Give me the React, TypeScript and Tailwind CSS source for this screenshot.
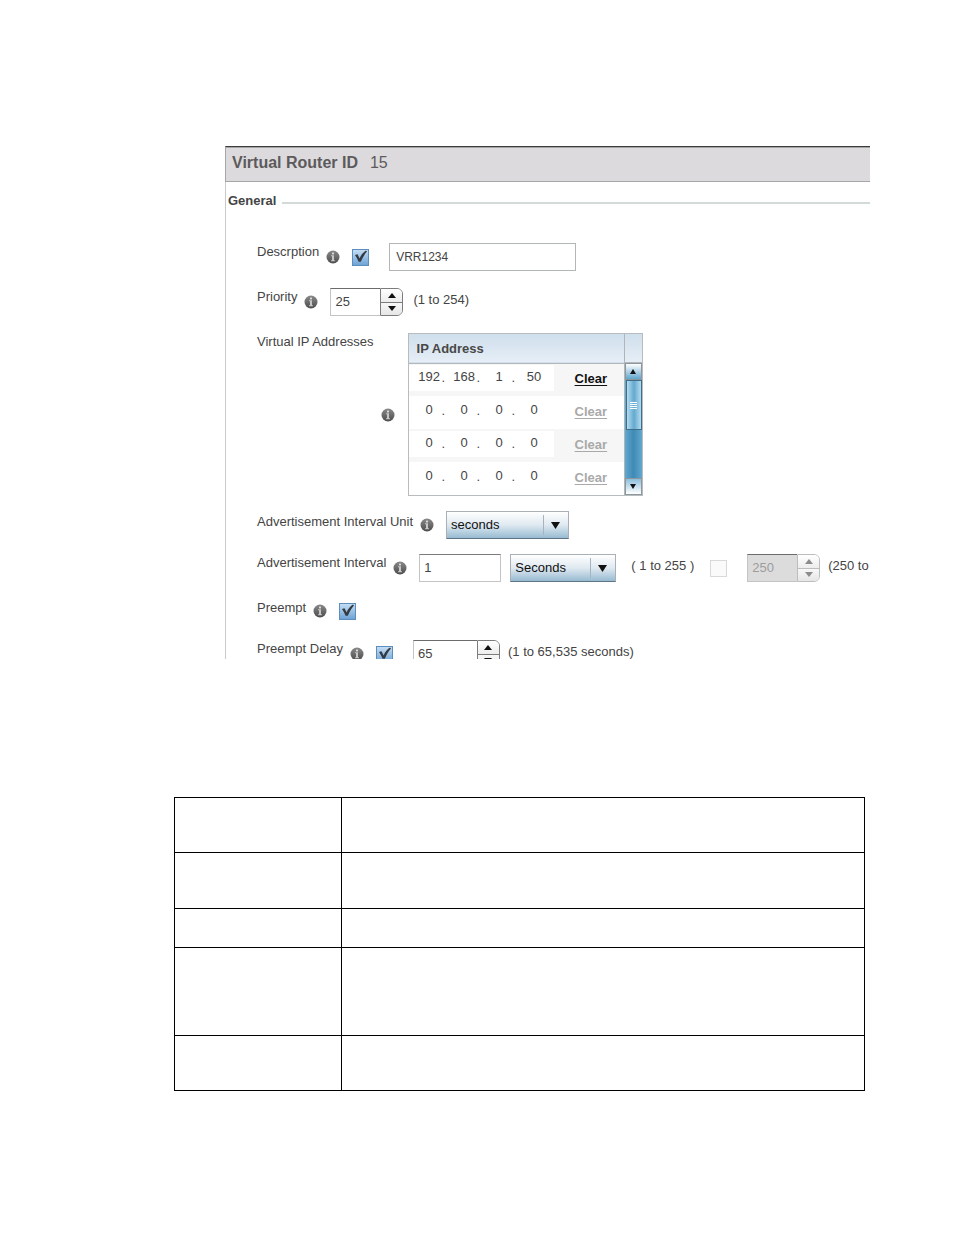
import { useState, type ReactNode } from "react";

const INITIAL_ADDRESSES = [
  ["192", "168", "1", "50"],
  ["0", "0", "0", "0"],
  ["0", "0", "0", "0"],
  ["0", "0", "0", "0"],
];

// Heights of the empty reference table rows
const REFERENCE_ROWS = ["h-[55px]", "h-[56px]", "h-[39px]", "h-[88px]", "h-[55px]"];

function InfoIcon() {
  return (
    <svg width="14" height="14" viewBox="0 0 14 14" className="-mr-px shrink-0" aria-hidden="true">
      <defs>
        <linearGradient id="info-fill" x1="0" y1="0" x2="0" y2="1">
          <stop offset="0" stopColor="#8a8a8a" />
          <stop offset="1" stopColor="#4c4c4c" />
        </linearGradient>
      </defs>
      <circle cx="7" cy="7" r="6.5" fill="url(#info-fill)" />
      <rect x="6" y="2.6" width="2" height="1.8" fill="#dcdcdc" />
      <path d="M5 5.2h3v5h1v1H5v-1h1V6.200H5z" fill="#c6c6c6" />
    </svg>
  );
}

function Arrow({ up = false, className = "h-[5px] w-2" }: { up?: boolean; className?: string }) {
  return (
    <svg viewBox="0 0 8 5" preserveAspectRatio="none" className={className} aria-hidden="true">
      <path d={up ? "M0 5L4 0L8 5z" : "M0 0L4 5L8 0z"} fill="currentColor" />
    </svg>
  );
}

interface RowProps {
  label: string;
  htmlFor?: string;
  labelClass?: string;
  children: ReactNode;
}

function Row({ label, htmlFor, labelClass = "", children }: RowProps) {
  return (
    <div className="flex min-h-7 items-center whitespace-nowrap">
      <label htmlFor={htmlFor} className={`mr-[7px] self-start leading-[18px] ${labelClass}`}>
        {label}
      </label>
      <InfoIcon />
      <div className="ml-[13px] flex items-center">{children}</div>
    </div>
  );
}

function CheckBox({ id, label, disabled = false }: { id?: string; label: string; disabled?: boolean }) {
  const [checked, setChecked] = useState(!disabled);

  return (
    <span className="relative flex size-[17px]">
      <input
        id={id}
        type="checkbox"
        aria-label={label}
        checked={checked}
        disabled={disabled}
        onChange={(e) => setChecked(e.target.checked)}
        className="size-[17px] appearance-none border border-[#5b8dbd] bg-linear-to-b from-[#c3ddf3] to-[#6fa3d6] disabled:border-[#d9d9d9] disabled:bg-[#fafafa] disabled:bg-none"
      />
      {checked && (
        <svg viewBox="0 0 17 17" className="pointer-events-none absolute inset-0" aria-hidden="true">
          <path d="M3 6L5.500 5.200L7.600 9.400C9 6.200 11 3.600 14 1.600L15 2.600C12.400 5.400 10.400 9 8.800 12.800L6.600 12.800C5.600 10.300 4.500 8.200 3 6z" fill="#333a42" />
        </svg>
      )}
    </span>
  );
}

interface SpinnerProps {
  id?: string;
  label: string;
  initial: number;
  widthClass: string;
  disabled?: boolean;
}

function Spinner({ id, label, initial, widthClass, disabled = false }: SpinnerProps) {
  const [value, setValue] = useState(String(initial));
  const step = (by: number) => setValue((v) => String(Number(v) + by));

  return (
    <div className="flex h-7">
      <input
        id={id}
        aria-label={label}
        value={value}
        disabled={disabled}
        onChange={(e) => setValue(e.target.value)}
        className={`${widthClass} h-7 border border-r-0 border-[#c4c4c4] border-t-[#6b6b6b] bg-white pb-0.5 pl-1 text-[#444] disabled:bg-[#dcdcdc] disabled:text-[#9c9c9c]`}
      />
      <div
        className={`flex w-[23px] flex-col overflow-hidden rounded-r-md border ${
          disabled ? "border-[#bdbdbd] text-[#8c8c8c]" : "border-[#7c7c7c] text-[#111]"
        }`}
      >
        <button
          type="button"
          aria-label={`Increase ${label}`}
          disabled={disabled}
          onClick={() => step(1)}
          className="flex flex-1 items-center justify-center border-b border-inherit bg-linear-to-b from-white to-[#ededed]"
        >
          <Arrow up />
        </button>
        <button
          type="button"
          aria-label={`Decrease ${label}`}
          disabled={disabled}
          onClick={() => step(-1)}
          className="flex flex-1 items-center justify-center bg-linear-to-b from-[#f8f8f8] to-[#e6e6e6]"
        >
          <Arrow />
        </button>
      </div>
    </div>
  );
}

function DropDown({ id, label, option, widthClass }: { id?: string; label: string; option: string; widthClass: string }) {
  return (
    <div className={`relative ${widthClass}`}>
      <select
        id={id}
        aria-label={label}
        className="h-7 w-full appearance-none border border-[#a9b1b6] border-b-[#5f7482] bg-linear-to-b from-white via-[#dfe9f0] to-[#98bbd2] pl-1 text-[#111]"
      >
        <option>{option}</option>
      </select>
      <span className="pointer-events-none absolute top-1 right-0 flex h-5 w-[26px] items-center justify-center border-l border-[#a5b4be] pr-0.5 text-[#111]">
        <Arrow className="h-[7px] w-[9px]" />
      </span>
    </div>
  );
}

function AddressTable() {
  const [addresses, setAddresses] = useState(INITIAL_ADDRESSES);

  const setOctet = (row: number, col: number, value: string) => {
    setAddresses((prev) => prev.map((a, r) => (r === row ? a.map((o, c) => (c === col ? value : o)) : a)));
  };

  const clearRow = (row: number) => {
    setAddresses((prev) => prev.map((a, r) => (r === row ? ["0", "0", "0", "0"] : a)));
  };

  return (
    <div className="ml-px flex border border-[#b8bcbe]">
      <table className="w-[215px] table-fixed border-collapse">
        <colgroup>
          <col className="w-[145px]" />
          <col />
        </colgroup>
        <thead>
          <tr className="h-[29px] border-b border-[#b4b8ba] bg-linear-to-b from-[#cfdfec] to-[#e6eef6]">
            <th colSpan={2} className="pl-2 text-left font-bold text-[#484848]">
              IP Address
            </th>
          </tr>
        </thead>
        <tbody>
          {addresses.map((address, row) => {
            const empty = address.every((o) => o === "0");
            return (
              <tr key={row} className="h-[33px] odd:bg-[#f6f6f6]">
                <td className="p-0">
                  <div className="mb-1 flex h-[26px] items-center bg-white pl-2">
                    {address.map((octet, col) => (
                      <span key={col} className="flex w-[35px] shrink-0 items-center">
                        <input
                          aria-label={`Address ${row + 1}, octet ${col + 1}`}
                          value={octet}
                          onChange={(e) => setOctet(row, col, e.target.value)}
                          className="w-[25px] bg-transparent pb-0.5 text-center text-[#444]"
                        />
                        {col < 3 && <span>.</span>}
                      </span>
                    ))}
                  </div>
                </td>
                <td className="pt-0 pr-0 pb-0.5 pl-[21px]">
                  <button
                    type="button"
                    onClick={() => clearRow(row)}
                    className={`font-bold underline underline-offset-2 ${empty ? "text-[#a9a9a9]" : "text-[#111]"}`}
                  >
                    Clear
                  </button>
                </td>
              </tr>
            );
          })}
        </tbody>
      </table>
      <div className="flex w-[18px] flex-col border-l border-[#b0b5b8]">
        <div className="h-[29px] border-b border-[#b4b8ba] bg-linear-to-b from-[#cfdfec] to-[#e6eef6]" />
        <button
          type="button"
          aria-label="Scroll up"
          className="flex h-[17px] items-center justify-center border border-[#8d979d] bg-linear-to-b from-white to-[#5fa5cd] text-[#111]"
        >
          <Arrow up className="h-[5px] w-[6px]" />
        </button>
        <div className="flex-1 bg-linear-to-r from-[#62a8cf] via-[#3f8ab6] to-[#62a8cf]">
          <div className="ml-px flex h-[50px] items-center justify-center border border-[#3f6d86] bg-linear-to-r from-[#b5dcf0] via-[#62a9d0] to-[#b5dcf0]">
            <svg width="7" height="9" viewBox="0 0 7 9" aria-hidden="true">
              <path d="M0 1.500h7M0 3.500h7M0 5.500h7M0 7.500h7" stroke="#fff" strokeWidth="1" />
            </svg>
          </div>
        </div>
        <button
          type="button"
          aria-label="Scroll down"
          className="flex h-[17px] items-center justify-center border border-[#8d979d] bg-linear-to-b from-[#8bbfdb] to-white text-[#111]"
        >
          <Arrow className="h-[5px] w-[6px]" />
        </button>
      </div>
    </div>
  );
}

export default function App() {
  const [description, setDescription] = useState("VRR1234");
  const [interval, setInterval] = useState("1");

  return (
    <main className="min-h-screen bg-white pt-[146px] pb-36 font-['Liberation_Sans',Arial,sans-serif] text-[13px] text-[#444]">
      {/* Settings panel, cut off at its lower edge */}
      <section className="mr-[84px] ml-[225px] h-[513px] overflow-hidden">
        <header className="flex h-9 items-center gap-3 border border-r-0 border-[#a6a5a7] border-t-[#3c3c3c] bg-[#dddadd] pb-0.5 pl-[6px] text-base text-[#5c5a5c] shadow-[inset_0_1px_0_#a3a5a2]">
          <h1 className="font-bold">Virtual Router ID</h1>
          <span>15</span>
        </header>

        <div className="border-l border-[#c9c9c9] pt-[9px]">
          <div className="flex items-center gap-[6px] pl-[2px]">
            <h2 className="leading-5 font-bold">General</h2>
            <div className="mt-1 h-[2px] flex-1 bg-[#d3dbd9]" />
          </div>

          <form className="flex flex-col gap-[15px] pt-8 pl-[31px]">
            <div className="flex flex-col gap-[17px]">
              <Row label="Descrption" htmlFor="description">
                <CheckBox label="Use description" />
                <input
                  id="description"
                  value={description}
                  onChange={(e) => setDescription(e.target.value)}
                  className="ml-5 h-7 w-[187px] border border-[#b3b6b6] bg-white pl-[6px] text-xs"
                />
              </Row>
              <Row label="Priority" htmlFor="priority">
                <Spinner id="priority" label="Priority" initial={25} widthClass="w-[50px]" />
                <span className="ml-[10px] pb-1">(1 to 254)</span>
              </Row>
              <Row label="Virtual IP Addresses">
                <AddressTable />
              </Row>
            </div>

            <Row label="Advertisement Interval Unit" htmlFor="interval-unit" labelClass="pt-0.5">
              <DropDown id="interval-unit" label="Advertisement Interval Unit" option="seconds" widthClass="w-[123px]" />
            </Row>
            <Row label="Advertisement Interval" htmlFor="interval">
              <input
                id="interval"
                value={interval}
                onChange={(e) => setInterval(e.target.value)}
                className="h-7 w-[82px] border border-[#c4c4c4] border-t-[#7b7b7b] bg-white pb-0.5 pl-1"
              />
              <div className="ml-[9px]">
                <DropDown label="Advertisement Interval units" option="Seconds" widthClass="w-[106px]" />
              </div>
              <span className="mr-4 ml-[15px] pb-1">( 1 to 255 )</span>
              <CheckBox label="Use centiseconds" disabled />
              <div className="ml-5">
                <Spinner label="Centiseconds" initial={250} widthClass="w-[50px]" disabled />
              </div>
              <span className="ml-2 pb-1">(250 to</span>
            </Row>
            <Row label="Preempt" htmlFor="preempt" labelClass="pt-0.5">
              <CheckBox id="preempt" label="Preempt" />
            </Row>
            <Row label="Preempt Delay" htmlFor="preempt-delay">
              <CheckBox label="Use preempt delay" />
              <div className="ml-5">
                <Spinner id="preempt-delay" label="Preempt Delay" initial={65} widthClass="w-16" />
              </div>
              <span className="ml-2 pb-1">(1 to 65,535 seconds)</span>
            </Row>
          </form>
        </div>
      </section>

      <div className="mt-[138px] mr-[89px] ml-[174px]">
        <table className="w-full table-fixed border-collapse border border-black">
          <tbody>
            {REFERENCE_ROWS.map((height, i) => (
              <tr key={i} className={height}>
                <td className="w-[167px] border border-black" />
                <td className="border border-black" />
              </tr>
            ))}
          </tbody>
        </table>
      </div>
    </main>
  );
}
